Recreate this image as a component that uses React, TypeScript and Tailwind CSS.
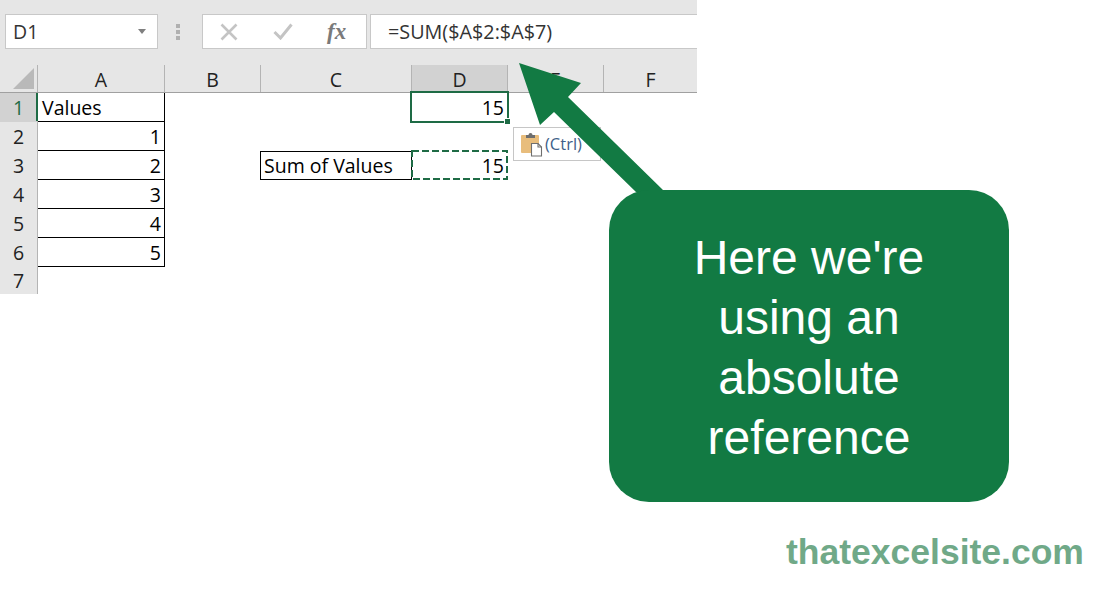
import React from "react";

const xl = "font-['Open_Sans','Liberation_Sans',sans-serif]";

const columns = [
  { label: "A", cls: "w-[127px]" },
  { label: "B", cls: "w-[96px]" },
  { label: "C", cls: "w-[151px]" },
  { label: "D", cls: "w-[96px] bg-[#d2d2d2] text-[#1e6b45]" },
  { label: "E", cls: "w-[96px]" },
  { label: "F", cls: "w-[93px] border-r-0" },
];

const aValues = ["Values", "1", "2", "3", "4", "5"];

function ColumnHeads() {
  return (
    <div className="flex h-[28px] border-b border-[#a0a0a0] bg-[#e6e6e6]">
      <div className="relative w-[38px] border-r border-[#b4b4b4]">
        <svg className="absolute left-0 top-0" width="37" height="27" viewBox="0 0 37 27">
          <polygon points="34,3 34,24 13,24" fill="#b9b9b9" />
        </svg>
      </div>
      {columns.map((c) => (
        <div
          key={c.label}
          className={`flex items-center justify-center border-r border-[#b4b4b4] pt-[3px] text-[19.5px] text-[#222] ${c.cls}`}
        >
          {c.label}
        </div>
      ))}
    </div>
  );
}

function Row({ n, children, height = "h-[29px]" }: { n: number; children?: React.ReactNode; height?: string }) {
  return (
    <div className={`flex ${height}`}>
      <div
        className={`flex w-[38px] items-center justify-center border-r border-[#b4b4b4] text-[19.5px] ${
          n === 1 ? "bg-[#d2d2d2] text-[#1e6b45]" : "bg-[#e6e6e6] text-[#222]"
        }`}
      >
        {n}
      </div>
      {children}
    </div>
  );
}

function Sheet() {
  return (
    <div className={`w-[697px] text-[19.5px] text-black ${xl}`}>
      {/* ribbon / formula bar */}
      <div className="flex h-[65px] items-start bg-[#e6e6e6] pl-[5px] pt-[14px]">
        <div className="flex h-[35px] w-[153px] items-center justify-between border border-[#c8c8c8] bg-white pl-[7px] pr-[11px] text-[19.5px] text-[#333]">
          <span>D1</span>
          <svg width="8" height="5" viewBox="0 0 8 5">
            <polygon points="0,0 8,0 4,5" fill="#7f7f7f" />
          </svg>
        </div>
        <div className="flex h-[35px] w-[40px] flex-col items-center justify-center gap-[2px]">
          <span className="h-[4px] w-[4px] bg-[#b0b0b0]" />
          <span className="h-[4px] w-[4px] bg-[#b0b0b0]" />
          <span className="h-[4px] w-[4px] bg-[#b0b0b0]" />
        </div>
        <div className="ml-[4px] flex h-[35px] w-[165px] items-center border border-[#c8c8c8] bg-white">
          <svg className="ml-[17px]" width="18" height="18" viewBox="0 0 18 18">
            <path d="M1.5 1.5 L16.5 16.5 M16.5 1.5 L1.5 16.5" stroke="#c4c4c4" strokeWidth="2.6" fill="none" />
          </svg>
          <svg className="ml-[35px]" width="20" height="17" viewBox="0 0 20 17">
            <path d="M1.5 9 L7.5 15 L18.5 1.5" stroke="#c4c4c4" strokeWidth="3" fill="none" />
          </svg>
          <span className="ml-[34px] font-['Liberation_Serif',serif] text-[23px] font-bold italic leading-none text-[#7a7a7a]">
            fx
          </span>
        </div>
        <div className="ml-[3px] flex h-[35px] flex-1 items-center border-y border-l border-[#c8c8c8] bg-white pl-[17px] text-[19.8px] text-[#333]">
          =SUM($A$2:$A$7)
        </div>
      </div>

      <ColumnHeads />

      {aValues.map((v, i) => {
        const n = i + 1;
        return (
          <Row key={n} n={n}>
            <div
              className={`flex w-[127px] items-center border-b border-r border-black pt-[1px] ${
                n === 1 ? "justify-start pl-[4px]" : "justify-end pr-[3px]"
              }`}
            >
              {v}
            </div>
            {n === 3 && (
              <>
                <div className="w-[96px] border-r border-black" />
                <div className="flex w-[151px] items-center border-y border-r border-black pl-[3px]">Sum of Values</div>
                <div className="flex w-[96px] items-center justify-end pr-[4px]">15</div>
              </>
            )}
            {n === 1 && (
              <>
                <div className="w-[96px]" />
                <div className="w-[151px]" />
                <div className="flex w-[96px] items-center justify-end pr-[4px]">15</div>
              </>
            )}
          </Row>
        );
      })}
      <Row n={7} height="h-[27px]" />
    </div>
  );
}

export default function App() {
  return (
    <div className="relative h-[594px] w-[1114px] overflow-hidden bg-white">
      <Sheet />

      {/* active cell */}
      <div className="absolute left-[410px] top-[91px] h-[32px] w-[99px] border-2 border-[#1e6b45]" />
      <div className="absolute left-[504px] top-[118px] h-[7px] w-[7px] border border-white bg-[#1e6b45]" />
      <div className="absolute left-[36px] top-[93px] h-[28px] w-[2px] bg-[#1e6b45]" />

      {/* copy marquee */}
      <svg className="absolute left-[410px] top-[149px]" width="99" height="32" viewBox="0 0 99 32">
        <rect x="2" y="2" width="95" height="28" fill="none" stroke="#1e6b45" strokeWidth="2" strokeDasharray="7 3" />
      </svg>

      {/* paste options */}
      <div className={`absolute left-[513px] top-[127px] flex h-[34px] w-[88px] items-center border border-[#c6c6c6] bg-white pl-[7px] text-[16.5px] text-[#3f5f8a] ${xl}`}>
        <svg width="22" height="25" viewBox="0 0 22 25">
          <rect x="0" y="3" width="18" height="18" rx="1" fill="#e8bd7c" />
          <path d="M5 3 h2.5 a2 2 0 0 1 4 0 h2.5 v3 h-9 z" fill="#6e6e6e" />
          <path d="M10.5 11.5 h6.5 l3.5 3.5 v9 h-10 z" fill="#fff" stroke="#6e6e6e" strokeWidth="1.1" />
          <path d="M17 11.5 v3.5 h3.5" fill="none" stroke="#6e6e6e" strokeWidth="1.1" />
        </svg>
        <span className="ml-[2px]">(Ctrl)</span>
      </div>

      {/* arrow */}
      <svg className="absolute left-[500px] top-[50px]" width="200" height="160" viewBox="0 0 200 160">
        <polygon points="19,13 81,33 68,47 163,140 163,150 136,142 54,62 40,75" fill="#127a43" />
      </svg>

      {/* callout */}
      <div className="absolute left-[609px] top-[190px] flex h-[312px] w-[400px] flex-col items-center justify-center rounded-[40px] bg-[#127a43] pt-[4px] font-['Liberation_Sans',Arial,sans-serif] text-[48px] leading-[60px] text-white">
        <span>Here we're</span>
        <span>using an</span>
        <span>absolute</span>
        <span>reference</span>
      </div>

      <div className="absolute left-[786px] top-[532px] font-['Liberation_Sans',Arial,sans-serif] text-[35.5px] font-bold leading-[40px] text-[#70a988]">
        thatexcelsite.com
      </div>
    </div>
  );
}
